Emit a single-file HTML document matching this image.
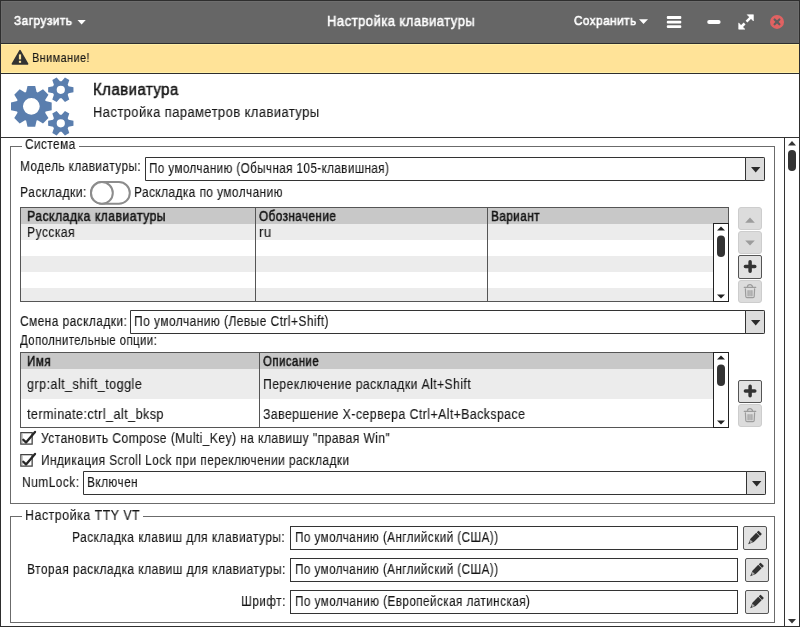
<!DOCTYPE html><html><head><meta charset="utf-8"><style>
*{box-sizing:border-box}html,body{margin:0;padding:0}body{width:800px;height:627px;position:relative;overflow:hidden;background:#fff;font-family:"Liberation Sans",sans-serif}
.a{position:absolute}.t{position:absolute;white-space:nowrap;line-height:1;-webkit-font-smoothing:antialiased;will-change:transform}
.tri{position:absolute;width:0;height:0}
</style></head><body>
<div class="a" style="left:0px;top:0px;width:800px;height:43px;background:#666"></div>
<div class="a" style="left:0px;top:0px;width:800px;height:1px;background:#2e2e2e"></div>
<div class="a" style="left:1px;top:1px;width:798px;height:1px;background:#6e6e6e"></div>
<div class="a" style="left:1px;top:1px;width:1px;height:42px;background:#6c6c6c"></div>
<div class="a" style="left:798px;top:1px;width:1px;height:42px;background:#6c6c6c"></div>
<div class="a" style="left:0px;top:43px;width:800px;height:1px;background:#2e2e2e"></div>
<div class="a" style="left:0px;top:44px;width:800px;height:29px;background:#ffe398"></div>
<div class="a" style="left:0px;top:44px;width:800px;height:1px;background:#fff0a8"></div>
<div class="a" style="left:0px;top:72px;width:800px;height:1px;background:#fff0a8"></div>
<div class="a" style="left:0px;top:73px;width:800px;height:1px;background:#2e2e2e"></div>
<div class="a" style="left:0px;top:137px;width:800px;height:1px;background:#333"></div>
<div class="a" style="left:0px;top:0px;width:1px;height:627px;background:#2e2e2e"></div>
<div class="a" style="left:799px;top:0px;width:1px;height:627px;background:#2e2e2e"></div>
<div class="a" style="left:0px;top:626px;width:800px;height:1px;background:#2e2e2e"></div>
<div class="a" style="left:784px;top:138px;width:1px;height:488px;background:#333"></div>
<div class="a" style="left:10px;top:146px;width:1px;height:358px;background:#6b6b6b"></div>
<div class="a" style="left:774px;top:146px;width:1px;height:358px;background:#6b6b6b"></div>
<div class="a" style="left:10px;top:503px;width:765px;height:1px;background:#6b6b6b"></div>
<div class="a" style="left:10px;top:146px;width:12px;height:1px;background:#6b6b6b"></div>
<div class="a" style="left:79px;top:146px;width:695px;height:1px;background:#6b6b6b"></div>
<div class="a" style="left:10px;top:516px;width:1px;height:107px;background:#6b6b6b"></div>
<div class="a" style="left:774px;top:516px;width:1px;height:107px;background:#6b6b6b"></div>
<div class="a" style="left:10px;top:622px;width:765px;height:1px;background:#6b6b6b"></div>
<div class="a" style="left:10px;top:516px;width:12px;height:1px;background:#6b6b6b"></div>
<div class="a" style="left:143px;top:516px;width:631px;height:1px;background:#6b6b6b"></div>
<svg class="a" style="left:0;top:0" width="800" height="627">
<path d="M788,145.5 L792,141 L796,145.5Z" fill="#333"/>
<rect x="788" y="150" width="8" height="21" rx="4" fill="#333"/>
<path d="M788,619 L792,623.5 L796,619Z" fill="#333"/>
<path fill="#5a7eae" fill-rule="evenodd" d="M26.10,92.09 L27.50,86.01 L35.20,86.01 L36.60,92.09 L37.72,92.55 L43.01,89.25 L48.45,94.69 L45.15,99.98 L45.61,101.10 L51.69,102.50 L51.69,110.20 L45.61,111.60 L45.15,112.72 L48.45,118.01 L43.01,123.45 L37.72,120.15 L36.60,120.61 L35.20,126.69 L27.50,126.69 L26.10,120.61 L24.98,120.15 L19.69,123.45 L14.25,118.01 L17.55,112.72 L17.09,111.60 L11.01,110.20 L11.01,102.50 L17.09,101.10 L17.55,99.98 L14.25,94.69 L19.69,89.25 L24.98,92.55ZM39.75,106.35 A8.4,8.4 0 1,0 22.95,106.35 A8.4,8.4 0 1,0 39.75,106.35Z"/>
<path fill="#5a7eae" fill-rule="evenodd" d="M68.55,86.30 L73.46,87.30 L73.46,92.30 L68.55,93.30 L67.70,94.76 L69.29,99.51 L64.96,102.01 L61.64,98.26 L59.96,98.26 L56.64,102.01 L52.31,99.51 L53.90,94.76 L53.05,93.30 L48.14,92.30 L48.14,87.30 L53.05,86.30 L53.90,84.84 L52.31,80.09 L56.64,77.59 L59.96,81.34 L61.64,81.34 L64.96,77.59 L69.29,80.09 L67.70,84.84ZM64.90,89.80 A4.1,4.1 0 1,0 56.70,89.80 A4.1,4.1 0 1,0 64.90,89.80Z"/>
<path fill="#5a7eae" fill-rule="evenodd" d="M68.55,119.80 L73.46,120.80 L73.46,125.80 L68.55,126.80 L67.70,128.26 L69.29,133.01 L64.96,135.51 L61.64,131.76 L59.96,131.76 L56.64,135.51 L52.31,133.01 L53.90,128.26 L53.05,126.80 L48.14,125.80 L48.14,120.80 L53.05,119.80 L53.90,118.34 L52.31,113.59 L56.64,111.09 L59.96,114.84 L61.64,114.84 L64.96,111.09 L69.29,113.59 L67.70,118.34ZM64.90,123.30 A4.1,4.1 0 1,0 56.70,123.30 A4.1,4.1 0 1,0 64.90,123.30Z"/>
<path d="M20,50.6 L27.6,64 L12.4,64Z" fill="#333" stroke="#333" stroke-width="1.6" stroke-linejoin="round"/>
<rect x="18.9" y="54.4" width="2.2" height="5" fill="#ffe59b"/><rect x="18.9" y="60.8" width="2.2" height="2" fill="#ffe59b"/>
<path d="M77.5,20 L85.75,20 L81.6,24.5Z" fill="#fff"/>
<path d="M639,19.2 L648,19.2 L643.5,24Z" fill="#fff"/>
<rect x="666.8" y="16.1" width="14.5" height="2.9" rx="1" fill="#fff"/>
<rect x="666.8" y="20.65" width="14.5" height="2.9" rx="1" fill="#fff"/>
<rect x="666.8" y="25.2" width="14.5" height="2.9" rx="1" fill="#fff"/>
<rect x="707.2" y="20" width="13.4" height="4" rx="2" fill="#fff"/>
<g stroke="#fff" stroke-width="2.5" fill="none"><line x1="751" y1="17.1" x2="746.5" y2="21.6"/><line x1="744.6" y1="23.5" x2="741.1" y2="27"/></g>
<path d="M753.4,14.7 L753.4,20.9 L747.2,14.7Z M738.7,29.2 L738.7,23 L744.9,29.2Z" fill="#fff" stroke="#fff" stroke-width="0.6" stroke-linejoin="round"/>
<circle cx="777" cy="21.9" r="7" fill="#e06262"/>
<g stroke="#5e5e5e" stroke-width="2.2" stroke-linecap="round"><line x1="774.6" y1="19.5" x2="779.4" y2="24.3"/><line x1="779.4" y1="19.5" x2="774.6" y2="24.3"/></g>
</svg>
<div class="a" style="left:145px;top:157px;width:620px;height:24px;border:1px solid #333;border-radius:0 1.5px 1.5px 0;background:#fff"></div>
<div class="a" style="left:745px;top:157px;width:20px;height:24px;border:1px solid #333;border-radius:0 1.5px 1.5px 0;background:#dcdcdc"></div>
<svg class="a" style="left:750.5px;top:165.5px" width="10" height="8"><path d="M0,1 L9.4,1 L4.7,6.4Z" fill="#2a2a2a"/></svg>
<div class="a" style="left:130px;top:310px;width:635px;height:24px;border:1px solid #333;border-radius:0 1.5px 1.5px 0;background:#fff"></div>
<div class="a" style="left:745px;top:310px;width:20px;height:24px;border:1px solid #333;border-radius:0 1.5px 1.5px 0;background:#dcdcdc"></div>
<svg class="a" style="left:750.5px;top:318.5px" width="10" height="8"><path d="M0,1 L9.4,1 L4.7,6.4Z" fill="#2a2a2a"/></svg>
<div class="a" style="left:83px;top:471px;width:683px;height:24px;border:1px solid #333;border-radius:0 1.5px 1.5px 0;background:#fff"></div>
<div class="a" style="left:746px;top:471px;width:20px;height:24px;border:1px solid #333;border-radius:0 1.5px 1.5px 0;background:#dcdcdc"></div>
<svg class="a" style="left:751.5px;top:479.5px" width="10" height="8"><path d="M0,1 L9.4,1 L4.7,6.4Z" fill="#2a2a2a"/></svg>
<svg class="a" style="left:89px;top:180px" width="45" height="27"><rect x="2" y="2" width="38.8" height="21.8" rx="10.9" fill="#fff" stroke="#8c8c8c" stroke-width="2"/><circle cx="12.9" cy="12.9" r="10.9" fill="#fff" stroke="#8c8c8c" stroke-width="2"/></svg>
<div class="a" style="left:20px;top:207px;width:709px;height:95px;border:1px solid #555;background:#fff"></div>
<div class="a" style="left:21px;top:208px;width:707px;height:16px;background:#c8c8c8"></div>
<div class="a" style="left:21px;top:224px;width:707px;height:16px;background:#ececec"></div>
<div class="a" style="left:21px;top:240px;width:707px;height:16px;background:#fff"></div>
<div class="a" style="left:21px;top:256px;width:707px;height:16px;background:#ececec"></div>
<div class="a" style="left:21px;top:272px;width:707px;height:16px;background:#fff"></div>
<div class="a" style="left:21px;top:288px;width:707px;height:13px;background:#ececec"></div>
<div class="a" style="left:255px;top:208px;width:1px;height:93px;background:#555"></div>
<div class="a" style="left:487px;top:208px;width:1px;height:93px;background:#555"></div>
<div class="a" style="left:713px;top:223px;width:16px;height:79px;border:1px solid #222;background:#fff"></div>
<svg class="a" style="left:713px;top:223px" width="16" height="79"><path d="M4,7.5 L8,3.5 L12,7.5Z" fill="#222"/><rect x="4" y="12.5" width="8" height="21.5" rx="4" fill="#333"/><path d="M4,71.5 L8,75.5 L12,71.5Z" fill="#222"/></svg>
<div class="a" style="left:20px;top:352px;width:709px;height:76px;border:1px solid #555;background:#fff"></div>
<div class="a" style="left:21px;top:353px;width:707px;height:16px;background:#c8c8c8"></div>
<div class="a" style="left:21px;top:369px;width:707px;height:30px;background:#ececec"></div>
<div class="a" style="left:21px;top:399px;width:707px;height:28px;background:#fff"></div>
<div class="a" style="left:259px;top:353px;width:1px;height:74px;background:#555"></div>
<div class="a" style="left:713px;top:352px;width:16px;height:76px;border:1px solid #222;background:#fff"></div>
<svg class="a" style="left:713px;top:352px" width="16" height="76"><path d="M4,7.5 L8,3.5 L12,7.5Z" fill="#222"/><rect x="4" y="12.5" width="8" height="21.5" rx="4" fill="#333"/><path d="M4,68.5 L8,72.5 L12,68.5Z" fill="#222"/></svg>
<div class="a" style="left:738px;top:207px;width:24px;height:23px;border:1px solid #cdcdcd;border-radius:3px;background:#dcdcdc"></div>
<svg class="a" style="left:738px;top:207px" width="24" height="23"><path d="M7.2,15.7 L12.0,10.6 L16.8,15.7Z" fill="#9c9c9c"/></svg>
<div class="a" style="left:738px;top:231px;width:24px;height:23px;border:1px solid #cdcdcd;border-radius:3px;background:#dcdcdc"></div>
<svg class="a" style="left:738px;top:231px" width="24" height="23"><path d="M7.2,9.5 L12.0,14.5 L16.8,9.5Z" fill="#9c9c9c"/></svg>
<div class="a" style="left:738px;top:255px;width:24px;height:24px;border:1px solid #555;border-radius:2px;background:#e2e2e2"></div>
<svg class="a" style="left:738px;top:255px" width="24" height="24"><path d="M7.4,11.6 H16.8 M12.1,6.8 V16.2" stroke="#333" stroke-width="3.5" stroke-linecap="round"/></svg>
<div class="a" style="left:738px;top:280px;width:24px;height:23px;border:1px solid #cdcdcd;border-radius:3px;background:#dcdcdc"></div>
<svg class="a" style="left:738px;top:280px" width="24" height="23"><g fill="none" stroke="#9c9c9c" stroke-width="1.2" stroke-linecap="round"><path d="M6.2,7.3 H17.8"/><path d="M9.4,7.3 A2.6,2.6 0 0,1 14.6,7.3"/><path d="M7.4,8.9 L7.8,16.5 Q7.9,17.7 9.0,17.7 H15.0 Q16.1,17.7 16.2,16.5 L16.6,8.9"/><path d="M10.1,10.7 V15.8 M12.0,10.7 V15.8 M13.9,10.7 V15.8"/></g></svg>
<div class="a" style="left:738px;top:380px;width:24px;height:23px;border:1px solid #555;border-radius:2px;background:#e2e2e2"></div>
<svg class="a" style="left:738px;top:380px" width="24" height="23"><path d="M7.4,11.1 H16.8 M12.1,6.3 V15.7" stroke="#333" stroke-width="3.5" stroke-linecap="round"/></svg>
<div class="a" style="left:738px;top:404px;width:24px;height:23px;border:1px solid #cdcdcd;border-radius:3px;background:#dcdcdc"></div>
<svg class="a" style="left:738px;top:404px" width="24" height="23"><g fill="none" stroke="#9c9c9c" stroke-width="1.2" stroke-linecap="round"><path d="M6.2,7.3 H17.8"/><path d="M9.4,7.3 A2.6,2.6 0 0,1 14.6,7.3"/><path d="M7.4,8.9 L7.8,16.5 Q7.9,17.7 9.0,17.7 H15.0 Q16.1,17.7 16.2,16.5 L16.6,8.9"/><path d="M10.1,10.7 V15.8 M12.0,10.7 V15.8 M13.9,10.7 V15.8"/></g></svg>
<svg class="a" style="left:0;top:0px" width="40" height="450"><rect x="20.85" y="432.65" width="11.3" height="11.45" fill="#fff" stroke="#444" stroke-width="1.3"/><line x1="22.1" y1="433.5" x2="22.1" y2="443.3" stroke="#aaa" stroke-width="1"/><path d="M23.3,439.7 L26,442.4 L35,431.9" fill="none" stroke="#262626" stroke-width="2.3" stroke-linecap="round" stroke-linejoin="round"/></svg>
<svg class="a" style="left:0;top:22px" width="40" height="450"><rect x="20.85" y="432.65" width="11.3" height="11.45" fill="#fff" stroke="#444" stroke-width="1.3"/><line x1="22.1" y1="433.5" x2="22.1" y2="443.3" stroke="#aaa" stroke-width="1"/><path d="M23.3,439.7 L26,442.4 L35,431.9" fill="none" stroke="#262626" stroke-width="2.3" stroke-linecap="round" stroke-linejoin="round"/></svg>
<div class="a" style="left:290px;top:526px;width:448px;height:24px;border:1px solid #333;background:#fff"></div>
<div class="a" style="left:290px;top:558px;width:448px;height:24px;border:1px solid #333;background:#fff"></div>
<div class="a" style="left:290px;top:590px;width:448px;height:24px;border:1px solid #333;background:#fff"></div>
<div class="a" style="left:743px;top:526px;width:24px;height:24px;border:1px solid #555;border-radius:2px;background:#e2e2e2"></div>
<svg class="a" style="left:743px;top:526px" width="24" height="24"><g transform="translate(11.4,12.1) rotate(45)"><rect x="-2.4" y="-8.2" width="4.8" height="2.6" rx="0.6" fill="#333"/><path d="M-2.4,-5 H2.4 V3.2 L0,8.8 L-2.4,3.2Z" fill="#333"/><path d="M-1.6,3.8 H1.6 L0.8,6.2 H-0.8Z" fill="#aaa"/></g></svg>
<div class="a" style="left:745px;top:558px;width:24px;height:24px;border:1px solid #555;border-radius:2px;background:#e2e2e2"></div>
<svg class="a" style="left:745px;top:558px" width="24" height="24"><g transform="translate(11.4,12.1) rotate(45)"><rect x="-2.4" y="-8.2" width="4.8" height="2.6" rx="0.6" fill="#333"/><path d="M-2.4,-5 H2.4 V3.2 L0,8.8 L-2.4,3.2Z" fill="#333"/><path d="M-1.6,3.8 H1.6 L0.8,6.2 H-0.8Z" fill="#aaa"/></g></svg>
<div class="a" style="left:745px;top:590px;width:24px;height:24px;border:1px solid #555;border-radius:2px;background:#e2e2e2"></div>
<svg class="a" style="left:745px;top:590px" width="24" height="24"><g transform="translate(11.4,12.1) rotate(45)"><rect x="-2.4" y="-8.2" width="4.8" height="2.6" rx="0.6" fill="#333"/><path d="M-2.4,-5 H2.4 V3.2 L0,8.8 L-2.4,3.2Z" fill="#333"/><path d="M-1.6,3.8 H1.6 L0.8,6.2 H-0.8Z" fill="#aaa"/></g></svg>
<span class="t" id="t0" style="left:13.75px;top:13.94px;font-size:13.3px;font-weight:normal;color:#fff;letter-spacing:0.5px;transform:scaleX(0.8962);transform-origin:0 0;-webkit-text-stroke:0.6px #fff">Загрузить</span>
<span class="t" id="t1" style="left:326.50px;top:14.35px;font-size:14px;font-weight:normal;color:#fff;letter-spacing:0.5px;transform:scaleX(0.9318);transform-origin:0 0;-webkit-text-stroke:0.5px #fff">Настройка клавиатуры</span>
<span class="t" id="t2" style="left:573.50px;top:13.94px;font-size:13.3px;font-weight:normal;color:#fff;letter-spacing:0.5px;transform:scaleX(0.8848);transform-origin:0 0;-webkit-text-stroke:0.6px #fff">Сохранить</span>
<span class="t" id="t3" style="left:32.00px;top:51.03px;font-size:13.2px;font-weight:normal;color:#151515;letter-spacing:0.5px;transform:scaleX(0.8279);transform-origin:0 0;-webkit-text-stroke:0.12px #151515">Внимание!</span>
<span class="t" id="t4" style="left:93.25px;top:81.66px;font-size:16px;font-weight:normal;color:#151515;letter-spacing:0.5px;transform:scaleX(0.9359);transform-origin:0 0;-webkit-text-stroke:0.5px #151515">Клавиатура</span>
<span class="t" id="t5" style="left:93.25px;top:105.35px;font-size:14px;font-weight:normal;color:#151515;letter-spacing:0.5px;transform:scaleX(0.9215);transform-origin:0 0;-webkit-text-stroke:0.12px #151515">Настройка параметров клавиатуры</span>
<span class="t" id="t6" style="left:25.00px;top:137.52px;font-size:13.8px;font-weight:normal;color:#151515;letter-spacing:0.5px;transform:scaleX(0.8556);transform-origin:0 0;-webkit-text-stroke:0.12px #151515">Система</span>
<span class="t" id="t7" style="left:19.90px;top:159.52px;font-size:13.8px;font-weight:normal;color:#151515;letter-spacing:0.5px;transform:scaleX(0.8565);transform-origin:0 0;-webkit-text-stroke:0.12px #151515">Модель клавиатуры:</span>
<span class="t" id="t8" style="left:148.90px;top:161.52px;font-size:13.8px;font-weight:normal;color:#151515;letter-spacing:0.5px;transform:scaleX(0.8428);transform-origin:0 0;-webkit-text-stroke:0.12px #151515">По умолчанию (Обычная 105-клавишная)</span>
<span class="t" id="t9" style="left:20.10px;top:185.52px;font-size:13.8px;font-weight:normal;color:#151515;letter-spacing:0.5px;transform:scaleX(0.8812);transform-origin:0 0;-webkit-text-stroke:0.12px #151515">Раскладки:</span>
<span class="t" id="t10" style="left:133.70px;top:185.52px;font-size:13.8px;font-weight:normal;color:#151515;letter-spacing:0.5px;transform:scaleX(0.8610);transform-origin:0 0;-webkit-text-stroke:0.12px #151515">Раскладка по умолчанию</span>
<span class="t" id="t11" style="left:26.90px;top:209.52px;font-size:13.8px;font-weight:normal;color:#151515;letter-spacing:0.5px;transform:scaleX(0.8898);transform-origin:0 0;-webkit-text-stroke:0.5px #151515">Раскладка клавиатуры</span>
<span class="t" id="t12" style="left:258.70px;top:209.52px;font-size:13.8px;font-weight:normal;color:#151515;letter-spacing:0.5px;transform:scaleX(0.8505);transform-origin:0 0;-webkit-text-stroke:0.5px #151515">Обозначение</span>
<span class="t" id="t13" style="left:491.20px;top:209.52px;font-size:13.8px;font-weight:normal;color:#151515;letter-spacing:0.5px;transform:scaleX(0.8532);transform-origin:0 0;-webkit-text-stroke:0.5px #151515">Вариант</span>
<span class="t" id="t14" style="left:26.90px;top:225.52px;font-size:13.8px;font-weight:normal;color:#151515;letter-spacing:0.5px;transform:scaleX(0.8779);transform-origin:0 0;-webkit-text-stroke:0.12px #151515">Русская</span>
<span class="t" id="t15" style="left:258.70px;top:225.52px;font-size:13.8px;font-weight:normal;color:#151515;letter-spacing:0.5px;transform:scaleX(0.9600);transform-origin:0 0;-webkit-text-stroke:0.12px #151515">ru</span>
<span class="t" id="t16" style="left:20.00px;top:314.52px;font-size:13.8px;font-weight:normal;color:#151515;letter-spacing:0.5px;transform:scaleX(0.8642);transform-origin:0 0;-webkit-text-stroke:0.12px #151515">Смена раскладки:</span>
<span class="t" id="t17" style="left:134.00px;top:314.52px;font-size:13.8px;font-weight:normal;color:#151515;letter-spacing:0.5px;transform:scaleX(0.8686);transform-origin:0 0;-webkit-text-stroke:0.12px #151515">По умолчанию (Левые Ctrl+Shift)</span>
<span class="t" id="t18" style="left:20.00px;top:333.52px;font-size:13.8px;font-weight:normal;color:#151515;letter-spacing:0.5px;transform:scaleX(0.8273);transform-origin:0 0;-webkit-text-stroke:0.12px #151515">Дополнительные опции:</span>
<span class="t" id="t19" style="left:27.00px;top:354.52px;font-size:13.8px;font-weight:normal;color:#151515;letter-spacing:0.5px;transform:scaleX(0.8441);transform-origin:0 0;-webkit-text-stroke:0.5px #151515">Имя</span>
<span class="t" id="t20" style="left:263.40px;top:354.52px;font-size:13.8px;font-weight:normal;color:#151515;letter-spacing:0.5px;transform:scaleX(0.8320);transform-origin:0 0;-webkit-text-stroke:0.5px #151515">Описание</span>
<span class="t" id="t21" style="left:27.00px;top:377.52px;font-size:13.8px;font-weight:normal;color:#151515;letter-spacing:0.5px;transform:scaleX(0.9100);transform-origin:0 0;-webkit-text-stroke:0.12px #151515">grp:alt_shift_toggle</span>
<span class="t" id="t22" style="left:263.40px;top:377.52px;font-size:13.8px;font-weight:normal;color:#151515;letter-spacing:0.5px;transform:scaleX(0.8798);transform-origin:0 0;-webkit-text-stroke:0.12px #151515">Переключение раскладки Alt+Shift</span>
<span class="t" id="t23" style="left:27.00px;top:407.52px;font-size:13.8px;font-weight:normal;color:#151515;letter-spacing:0.5px;transform:scaleX(0.9111);transform-origin:0 0;-webkit-text-stroke:0.12px #151515">terminate:ctrl_alt_bksp</span>
<span class="t" id="t24" style="left:263.40px;top:407.52px;font-size:13.8px;font-weight:normal;color:#151515;letter-spacing:0.5px;transform:scaleX(0.8898);transform-origin:0 0;-webkit-text-stroke:0.12px #151515">Завершение X-сервера Ctrl+Alt+Backspace</span>
<span class="t" id="t25" style="left:40.50px;top:431.52px;font-size:13.8px;font-weight:normal;color:#151515;letter-spacing:0.5px;transform:scaleX(0.8727);transform-origin:0 0;-webkit-text-stroke:0.12px #151515">Установить Compose (Multi_Key) на клавишу "правая Win"</span>
<span class="t" id="t26" style="left:40.50px;top:453.52px;font-size:13.8px;font-weight:normal;color:#151515;letter-spacing:0.5px;transform:scaleX(0.8600);transform-origin:0 0;-webkit-text-stroke:0.12px #151515">Индикация Scroll Lock при переключении раскладки</span>
<span class="t" id="t27" style="left:21.90px;top:475.52px;font-size:13.8px;font-weight:normal;color:#151515;letter-spacing:0.5px;transform:scaleX(0.8690);transform-origin:0 0;-webkit-text-stroke:0.12px #151515">NumLock:</span>
<span class="t" id="t28" style="left:86.90px;top:475.52px;font-size:13.8px;font-weight:normal;color:#151515;letter-spacing:0.5px;transform:scaleX(0.8582);transform-origin:0 0;-webkit-text-stroke:0.12px #151515">Включен</span>
<span class="t" id="t29" style="left:24.80px;top:508.52px;font-size:13.8px;font-weight:normal;color:#151515;letter-spacing:0.5px;transform:scaleX(0.9065);transform-origin:0 0;-webkit-text-stroke:0.12px #151515">Настройка TTY VT</span>
<span class="t" id="t30" style="left:72.10px;top:530.52px;font-size:13.8px;font-weight:normal;color:#151515;letter-spacing:0.5px;transform:scaleX(0.8687);transform-origin:0 0;-webkit-text-stroke:0.12px #151515">Раскладка клавиш для клавиатуры:</span>
<span class="t" id="t31" style="left:26.50px;top:562.52px;font-size:13.8px;font-weight:normal;color:#151515;letter-spacing:0.5px;transform:scaleX(0.8712);transform-origin:0 0;-webkit-text-stroke:0.12px #151515">Вторая раскладка клавиш для клавиатуры:</span>
<span class="t" id="t32" style="left:240.50px;top:594.52px;font-size:13.8px;font-weight:normal;color:#151515;letter-spacing:0.5px;transform:scaleX(0.8567);transform-origin:0 0;-webkit-text-stroke:0.12px #151515">Шрифт:</span>
<span class="t" id="t33" style="left:295.25px;top:530.52px;font-size:13.8px;font-weight:normal;color:#151515;letter-spacing:0.5px;transform:scaleX(0.8474);transform-origin:0 0;-webkit-text-stroke:0.12px #151515">По умолчанию (Английский (США))</span>
<span class="t" id="t34" style="left:295.25px;top:562.52px;font-size:13.8px;font-weight:normal;color:#151515;letter-spacing:0.5px;transform:scaleX(0.8474);transform-origin:0 0;-webkit-text-stroke:0.12px #151515">По умолчанию (Английский (США))</span>
<span class="t" id="t35" style="left:295.25px;top:594.52px;font-size:13.8px;font-weight:normal;color:#151515;letter-spacing:0.5px;transform:scaleX(0.8503);transform-origin:0 0;-webkit-text-stroke:0.12px #151515">По умолчанию (Европейская латинская)</span>
</body></html>
